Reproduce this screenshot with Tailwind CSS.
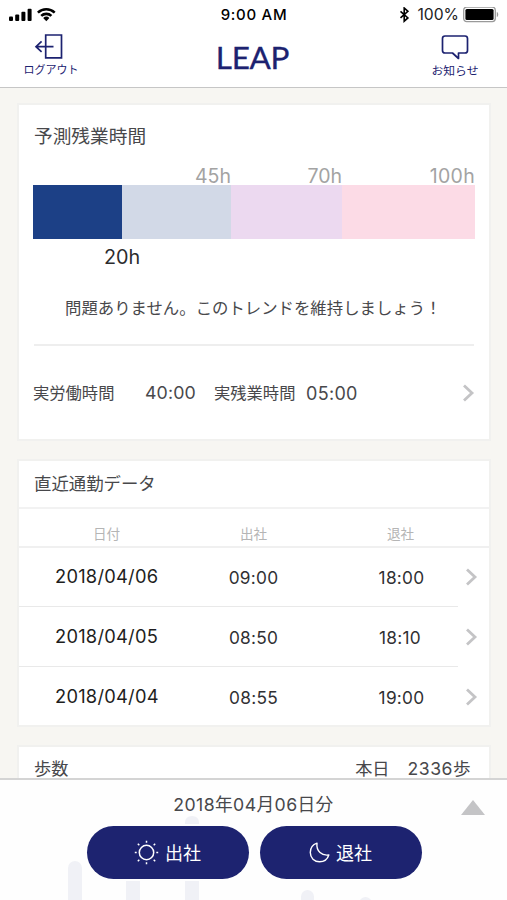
<!DOCTYPE html>
<html lang="ja">
<head>
<meta charset="utf-8">
<title>LEAP</title>
<script src="https://cdn.jsdelivr.net/npm/@tailwindcss/browser@4"></script>
</head>
<body class="w-[507px] h-[900px] overflow-hidden flex flex-col bg-[#f7f6f2] font-['Inter','Noto_Sans_CJK_JP',sans-serif] text-[#48484b] whitespace-nowrap">
<header class="h-[88px] shrink-0 bg-white border-b border-[#c6c6c6] flex flex-col">
  <div class="h-[30px] grid grid-cols-3 items-center pl-[9px] pr-[8px] text-black">
    <div class="flex items-center">
      <svg class="w-[48px] h-[16px]" viewBox="0 0 48 16">
        <g><rect x="0" y="9.500" width="4" height="4.500" rx="1"/><rect x="6.2" y="7.500" width="4" height="6.500" rx="1"/><rect x="12.4" y="4.8" width="4" height="9.2" rx="1"/><rect x="18.6" y="1.800" width="4" height="12.200" rx="1"/></g>
        <g fill="none" stroke="#000" stroke-width="2.6"><path d="M28.9 5.6a12.3 12.3 0 0 1 16.8 0"/><path d="M32.2 8.9a7.4 7.4 0 0 1 10.2 0"/></g>
        <path d="M34.2 11a4.5 4.5 0 0 1 6.2 0L37.3 14.200z"/>
      </svg>
    </div>
    <div class="text-center text-[15px] font-medium leading-[16px] tracking-[0.7px]">9:00 AM</div>
    <div class="flex items-center justify-end">
      <svg class="w-[11px] h-[16px]" viewBox="0 0 11 16" fill="none" stroke="#000" stroke-width="1.6"><path d="M1.5 4.3l7.4 6.6-3.7 3.3V1l3.7 3.300-7.4 6.6"/></svg>
      <span class="ml-[7px] text-[15.7px] leading-[16px] text-[#222]">100%</span>
      <svg class="ml-[4px] w-[36px] h-[16px]" viewBox="0 0 36 16"><rect x=".7" y=".2" width="31.6" height="14.4" rx="3" fill="none" stroke="#9a9a9a" stroke-width="1.3"/><rect x="2.4" y="1.900" width="28.2" height="11" rx="1.5"/><path d="M33.8 5v5c1.9-.6 1.9-4.4 0-5z" fill="#9a9a9a"/></svg>
    </div>
  </div>
  <div class="flex-1 flex justify-between px-[24px] text-[#1c2270]">
    <div class="w-[54px] flex flex-col items-center pt-[3px]">
      <svg class="-ml-[5px] w-[30px] h-[28px]" viewBox="0 0 30 28" fill="none" stroke="currentColor" stroke-width="1.7"><path d="M11.7 2h15.8v22.8H11.7z"/><path d="M19.500 13.7H2M7.6 8.3L2 13.7l5.6 5.2"/></svg>
      <span class="mt-[2px] text-[11px] leading-[14px]">ログアウト</span>
    </div>
    <h1 class="font-['Lato'] text-[31.500px] leading-[34px] pt-[10px] pr-[2px] tracking-[-0.3px] [-webkit-text-stroke:0.3px_#1c2270]">LEAP</h1>
    <div class="w-[54px] flex flex-col items-center pt-[3px] pr-[2px]">
      <svg class="w-[30px] h-[28px]" viewBox="0 0 30 28" fill="none" stroke="currentColor" stroke-width="1.7" stroke-linejoin="round"><path d="M5 3h20q2.500 0 2.500 2.500v12q0 2.500-2.500 2.500h-6.500v5.500l-6-5.500H5q-2.500 0-2.500-2.500v-12Q2.500 3 5 3z"/></svg>
      <span class="mt-[3px] text-[11.8px] leading-[14px]">お知らせ</span>
    </div>
  </div>
</header>
<main class="flex-1 min-h-0 overflow-hidden px-[17px] pt-[15px] flex flex-col gap-[18px]">
  <section class="h-[338px] w-[474px] shrink-0 bg-white border-2 border-[#f1f1ef] px-[14px] flex flex-col">
    <h2 class="mt-[19px] pl-[1px] text-[18.7px] leading-[26px]">予測残業時間</h2>
    <div class="mt-[14px] w-[442px] h-[20px] flex text-[19.5px] leading-[24px] text-[#a3a3a3] text-right">
      <span class="w-[198px]">45h</span><span class="w-[111px]">70h</span><span class="w-[133px] tracking-[0.3px]">100h</span>
    </div>
    <div class="mt-[1px] w-[442px] h-[54px] flex">
      <div class="w-[89px] bg-[#1c4086]"></div><div class="w-[109px] bg-[#d2d9e7]"></div><div class="w-[111px] bg-[#ecd9f0]"></div><div class="w-[133px] bg-[#fcdbe6]"></div>
    </div>
    <div class="mt-[6px] pl-[71px] text-[19.800px] leading-[24px] text-[#2c2c2e]">20h</div>
    <p class="mt-[27px] pl-[32px] text-[16.4px] leading-[24px]">問題ありません。このトレンドを維持しましょう！</p>
    <div class="mt-[24px] mx-[1px] h-[2px] shrink-0 bg-[#eeeeee]"></div>
    <div class="mt-[35px] flex items-center h-[24px] text-[16.3px]">
      <span class="w-[112px]">実労働時間</span><span class="w-[69px] text-[17.8px] tracking-[0.1px]">40:00</span><span class="w-[92px]">実残業時間</span><span class="text-[18px] tracking-[0.3px]">05:00</span>
      <svg class="ml-auto w-[13px] h-[18px]" viewBox="0 0 13 18" fill="none" stroke="#c4c4c6" stroke-width="2.8"><path d="M2 1.500l8 7.500-8 7.500"/></svg>
    </div>
  </section>
  <section class="h-[268px] w-[474px] shrink-0 bg-white border-2 border-[#f1f1ef] flex flex-col">
    <h2 class="h-[48px] shrink-0 pl-[15px] border-b-2 border-[#f2f2f2] text-[17.4px] leading-[45px]">直近通勤データ</h2>
    <div class="h-[39px] shrink-0 border-b-2 border-[#f0f0f0] flex text-[13.6px] leading-[50px] text-[#b5b5b5] text-center">
      <span class="w-[175px]">日付</span><span class="w-[119px]">出社</span><span class="w-[175px]">退社</span>
    </div>
    <div class="h-[58px] shrink-0 flex items-center text-[17.3px] text-[#303033]">
      <span class="w-[174px] pl-[36px] text-[18.300px] tracking-[0.25px] text-[#1e1e20]">2018/04/06</span><span class="w-[121px] pt-[2px] text-center tracking-[0.25px]">09:00</span><span class="w-[175px] pt-[2px] text-center tracking-[0.25px]">18:00</span>
      <svg class="-ml-[24px] w-[13px] h-[18px]" viewBox="0 0 13 18" fill="none" stroke="#c4c4c6" stroke-width="2.8"><path d="M2 1.500l8 7.500-8 7.500"/></svg>
    </div>
    <div class="w-[439px] h-px shrink-0 bg-[#e9e9e9]"></div>
    <div class="h-[59px] shrink-0 pt-px flex items-center text-[17.3px] text-[#303033]">
      <span class="w-[174px] pl-[36px] text-[18.300px] tracking-[0.25px] text-[#1e1e20]">2018/04/05</span><span class="w-[121px] pt-[2px] text-center tracking-[0.25px]">08:50</span><span class="w-[172px] pt-[2px] text-center tracking-[0.25px]">18:10</span>
      <svg class="-ml-[21px] w-[13px] h-[18px]" viewBox="0 0 13 18" fill="none" stroke="#c4c4c6" stroke-width="2.8"><path d="M2 1.500l8 7.500-8 7.500"/></svg>
    </div>
    <div class="w-[439px] h-px shrink-0 bg-[#e9e9e9]"></div>
    <div class="h-[58px] shrink-0 pt-[2px] flex items-center text-[17.3px] text-[#303033]">
      <span class="w-[174px] pl-[36px] text-[18.300px] tracking-[0.25px] text-[#1e1e20]">2018/04/04</span><span class="w-[121px] pt-[2px] text-center tracking-[0.25px]">08:55</span><span class="w-[175px] pt-[2px] text-center tracking-[0.25px]">19:00</span>
      <svg class="-ml-[24px] w-[13px] h-[18px]" viewBox="0 0 13 18" fill="none" stroke="#c4c4c6" stroke-width="2.8"><path d="M2 1.500l8 7.500-8 7.500"/></svg>
    </div>
  </section>
  <section class="h-[200px] w-[474px] shrink-0 bg-white border-2 border-[#f1f1ef] pl-[15px] pr-[18px] pt-[13px] flex items-start text-[17.2px] leading-[18px]">
    <h2>歩数</h2><span class="ml-auto">本日</span><span class="ml-[18px] tracking-[0.5px] text-[17.600px]">2336歩</span>
  </section>
</main>
<footer class="relative h-[122px] shrink-0 bg-[#fefefe] border-t-2 border-[#d4d4d4] overflow-hidden">
  <svg class="absolute inset-0 w-[507px] h-[120px]" viewBox="0 780 507 120" fill="#f0f1f6"><rect x="68" y="861" width="14" height="60" rx="7"/><path d="M126 881h14v19h-14zM185 881h14v19h-14z"/><path d="M185 824v-1q0-7 7-7t7 7v1z"/><rect x="301" y="890" width="13" height="30" rx="6.500"/><rect x="359" y="897" width="13" height="30" rx="6.500"/></svg>
  <div class="relative flex flex-col">
    <div class="h-[46px] grid grid-cols-[1fr_auto_1fr] items-center">
      <span class="col-start-2 pt-[4px] text-[17.700px] leading-[26px] tracking-[0.4px]">2018年04月06日分</span>
      <svg class="justify-self-end mr-[22px] mt-[9px] w-[24px] h-[15px]" viewBox="0 0 24 15" fill="#c4c4c6"><path d="M12 0l12 15H0z"/></svg>
    </div>
    <div class="flex justify-center gap-[11px] pl-[1px] text-white text-[18px]">
      <button class="w-[162px] h-[53px] rounded-full bg-[#1d2370] flex items-center justify-center gap-[6px]">
        <svg class="w-[25px] h-[25px]" viewBox="0 0 25 25" fill="none" stroke="#fff" stroke-width="1.500"><circle cx="12.500" cy="12.500" r="7.200"/><path d="M12.500 .8v1.900M12.500 22.300v1.900M.8 12.500h1.900M22.300 12.500h1.900M3.800 3.800l1.500 1.500M19.700 19.700l1.500 1.500M3.800 21.200l1.500-1.500M19.700 5.300l1.500-1.500"/></svg>
        <span class="pt-[2px] leading-[26px]">出社</span>
      </button>
      <button class="w-[162px] h-[53px] rounded-full bg-[#1d2370] flex items-center justify-center gap-[6px]">
        <svg class="w-[21px] h-[21px]" viewBox="0 0 21 21" fill="none" stroke="#fff" stroke-width="1.400" stroke-linejoin="round"><path d="M8 1.200C3.700 2.600 1.300 6.200 1.300 10.600c0 5.300 4 9.200 9.200 9.200 4.400 0 8-2.600 9.300-6.800C13 14 7 9.500 8 1.200z"/></svg>
        <span class="pt-[2px] leading-[26px]">退社</span>
      </button>
    </div>
  </div>
</footer>
</body>
</html>
